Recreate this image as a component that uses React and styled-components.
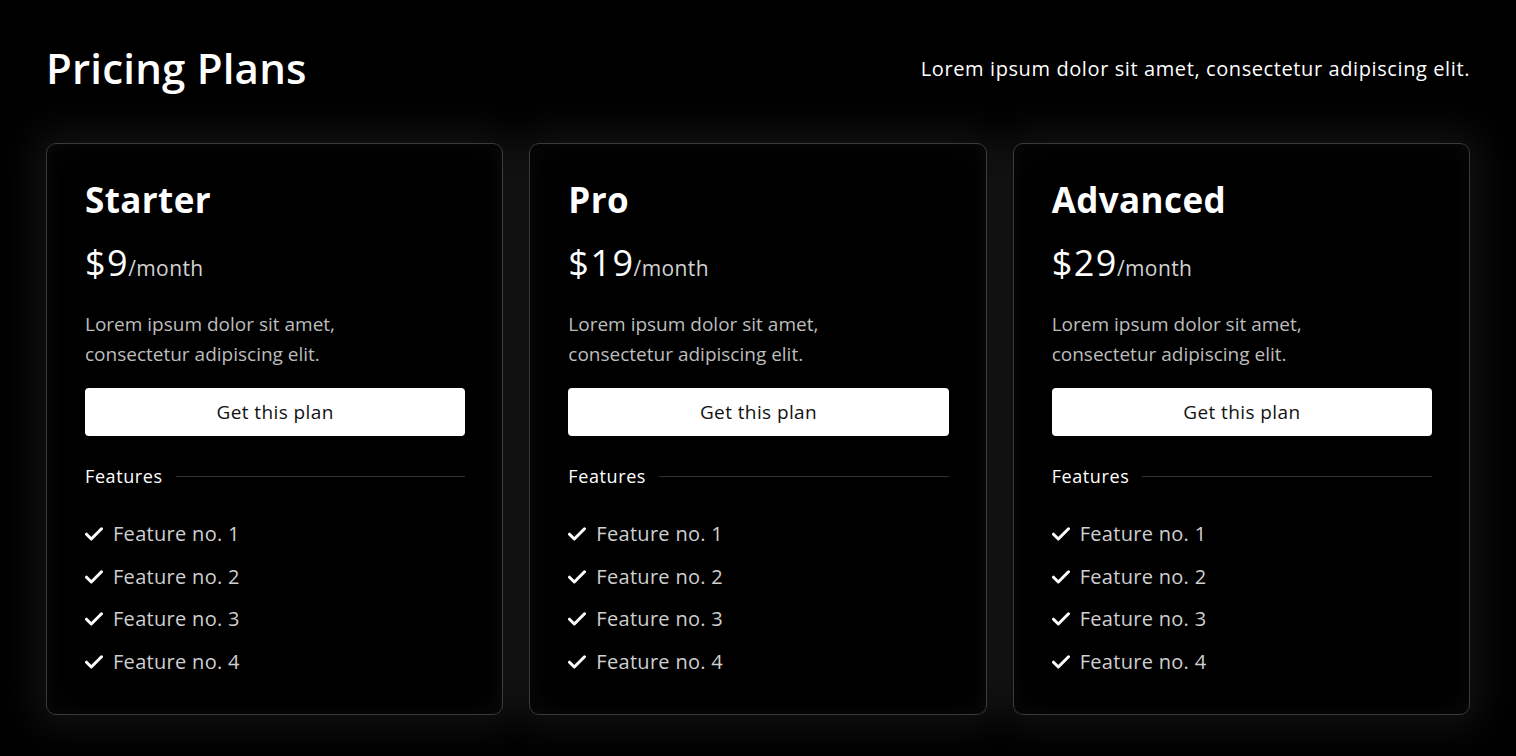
import React from "react";
import styled, { createGlobalStyle } from "styled-components";

const GlobalStyle = createGlobalStyle`
  html, body {
    margin: 0;
    padding: 0;
    background: #000;
  }
  body {
    font-family: "Open Sans", "Liberation Sans", sans-serif;
    color: #fff;
  }
  * { box-sizing: border-box; }
`;

const Page = styled.main`
  min-height: 756px;
  padding: 38px 46px 42px;
  background: #000;
`;

const Header = styled.header`
  display: flex;
  align-items: center;
  justify-content: space-between;
  height: 60px;
  margin-bottom: 45px;
`;

const Title = styled.h1`
  margin: 0;
  font-size: 42px;
  font-weight: 600;
  letter-spacing: 0.2px;
  line-height: 1;
`;

const Tagline = styled.p`
  margin: 0;
  font-size: 20px;
  font-weight: 400;
  letter-spacing: 0.6px;
  color: #fff;
`;

const Grid = styled.section`
  display: grid;
  grid-template-columns: repeat(3, 1fr);
  gap: 26px;
`;

const Card = styled.article`
  display: flex;
  flex-direction: column;
  height: 572px;
  padding: 34px 37px 0 38px;
  border: 1px solid #3a3a3a;
  border-radius: 10px;
  background: #000;
  box-shadow: 0 0 40px 12px rgba(255, 255, 255, 0.075),
    inset 0 0 24px rgba(255, 255, 255, 0.04);
`;

const PlanName = styled.h2`
  margin: 0;
  font-size: 35px;
  font-weight: 700;
  letter-spacing: 0.4px;
  line-height: 44px;
`;

const Price = styled.div`
  margin-top: 21px;
  display: flex;
  align-items: baseline;
  line-height: 40px;
`;

const Amount = styled.span`
  font-size: 36px;
  font-weight: 500;
  letter-spacing: 1.5px;
  color: #fff;
`;

const Period = styled.span`
  margin-left: -1px;
  font-size: 21px;
  letter-spacing: 0.4px;
  color: #d2d2d2;
`;

const Description = styled.p`
  margin: 21px 0 0;
  font-size: 19px;
  line-height: 30px;
  color: #bdbdbd;
`;

const Action = styled.button`
  margin-top: 19px;
  height: 48px;
  width: 100%;
  border: none;
  border-radius: 4px;
  background: #fff;
  color: #111;
  font-family: inherit;
  font-size: 19px;
  letter-spacing: 0.4px;
  cursor: pointer;
`;

const FeatureHeading = styled.div`
  margin-top: 28px;
  display: flex;
  align-items: center;
  gap: 13px;
  font-size: 18px;
  letter-spacing: 0.6px;
  color: #fff;
  line-height: 24px;

  &::after {
    content: "";
    flex: 1;
    height: 1px;
    background: #333;
  }
`;

const FeatureList = styled.ul`
  list-style: none;
  margin: 32px 0 0;
  padding: 0;
  display: flex;
  flex-direction: column;
  gap: 14.7px;
`;

const FeatureItem = styled.li`
  display: flex;
  align-items: center;
  gap: 10px;
  font-size: 20px;
  letter-spacing: 0.3px;
  line-height: 28px;
  color: #cfcfcf;
`;

const Check = () => (
  <svg width="18" height="14" viewBox="0 0 18 14" aria-hidden="true">
    <path
      d="M1.5 7.2 L6.3 12 L16.5 1.8"
      fill="none"
      stroke="#fff"
      strokeWidth="3"
      strokeLinecap="round"
      strokeLinejoin="round"
    />
  </svg>
);

const plans = [
  { name: "Starter", price: "$9" },
  { name: "Pro", price: "$19" },
  { name: "Advanced", price: "$29" },
];

const features = ["Feature no. 1", "Feature no. 2", "Feature no. 3", "Feature no. 4"];

export default function App() {
  return (
    <>
      <GlobalStyle />
      <Page>
        <Header>
          <Title>Pricing Plans</Title>
          <Tagline>Lorem ipsum dolor sit amet, consectetur adipiscing elit.</Tagline>
        </Header>
        <Grid>
          {plans.map((plan) => (
            <Card key={plan.name}>
              <PlanName>{plan.name}</PlanName>
              <Price>
                <Amount>{plan.price}</Amount>
                <Period>/month</Period>
              </Price>
              <Description>
                Lorem ipsum dolor sit amet,
                <br />
                consectetur adipiscing elit.
              </Description>
              <Action type="button">Get this plan</Action>
              <FeatureHeading>Features</FeatureHeading>
              <FeatureList>
                {features.map((f) => (
                  <FeatureItem key={f}>
                    <Check />
                    {f}
                  </FeatureItem>
                ))}
              </FeatureList>
            </Card>
          ))}
        </Grid>
      </Page>
    </>
  );
}
